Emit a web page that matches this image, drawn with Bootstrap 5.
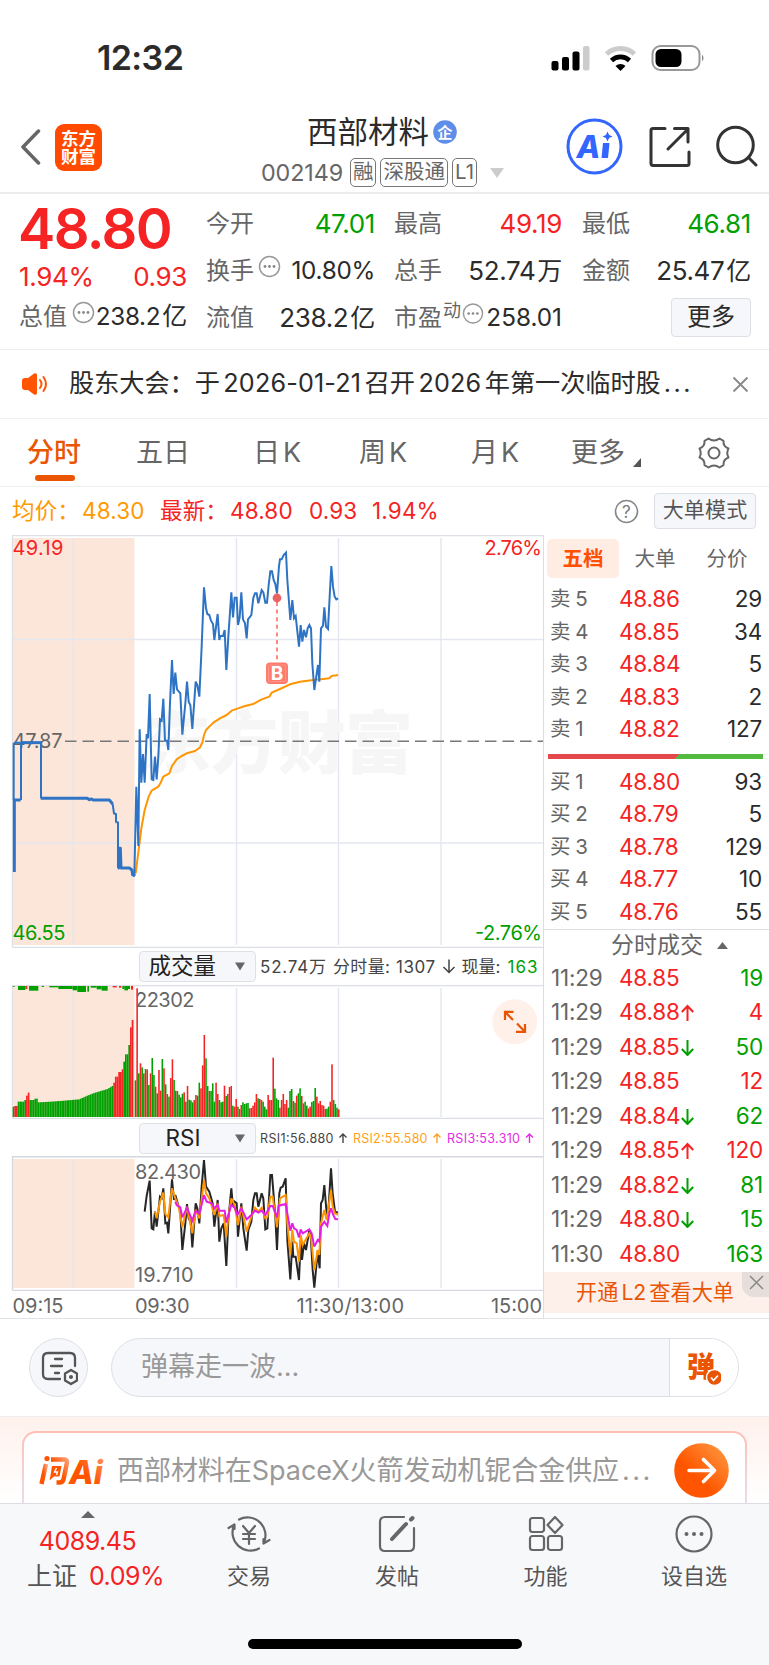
<!DOCTYPE html>
<html lang="zh-CN">
<head>
<meta charset="utf-8">
<meta name="viewport" content="width=device-width, initial-scale=1">
<title>西部材料 002149</title>
<link href="https://cdn.jsdelivr.net/npm/bootstrap@5.3.0/dist/css/bootstrap.min.css" rel="stylesheet">
<style>
:root{--up:#f52323;--down:#00a000;--or:#ea5504;--txt:#2b2b2b;--sub:#666}
html,body{margin:0;overflow-x:hidden}
body{width:769px;height:1665px;overflow:hidden;background:#fff;color:var(--txt);font-family:Inter,"Noto Sans CJK SC",sans-serif;font-size:24px;line-height:1;font-weight:400}
svg{display:block;flex:none}
svg text{font-family:Inter,"Noto Sans CJK SC",sans-serif}
.up{color:var(--up)}.down{color:var(--down)}.sub{color:var(--sub)}
.nw{white-space:nowrap}
.statusbar{height:101px;padding:14px 64px 0 97px}
.clock{font-size:34px;font-weight:600;letter-spacing:-.6px}
.head{height:93px;border-bottom:2px solid #ececec;padding:0 0 0 20px}
.logo{width:47px;height:47px;border-radius:9px;background:#ff4a00;color:#fff;font-size:17.5px;line-height:18px;font-weight:700;margin-left:14px;padding-top:6px;margin-top:1px}
.title{flex:none;width:250px;margin-left:150px;height:92px}
.title .nm{font-size:30.5px;height:44px;line-height:44px;margin:9px 0 0 55px;color:#2b2b2b}
.title .cd{height:30px;margin:4px 0 0 9px;font-size:23.3px;letter-spacing:-.1px;color:var(--sub)}
.tagbox{border:1.5px solid #777;border-radius:5px;height:29px;line-height:25px;padding:0 2px;font-size:20.5px;letter-spacing:0;margin-left:4px}
.quote{height:156px;border-bottom:1px solid #ededed;padding:0 18px 0 19px}
.quote>div{padding-top:6px}
.q0{width:168px}.q1{width:169px;margin-left:19px}.q2{width:168px;margin-left:19px}.q3{width:169px;margin-left:20px}
.qr{height:47px;display:flex;justify-content:space-between;align-items:center;white-space:nowrap}
.qr b{font-weight:400;letter-spacing:-.35px;font-size:26px}
.qr b.sm{font-size:24.3px;letter-spacing:-.3px}
.qr b i{font-style:normal;margin-left:2px;font-size:25px}
.qr .lb{color:var(--sub);display:flex;font-size:24px}
.big{font-size:56px;font-weight:600;letter-spacing:-1.6px;height:54px;line-height:58px;margin-left:-1px;color:var(--up)}
.morebtn{width:80px;height:39px;border:1.5px solid #dcdfe6;border-radius:4px;background:#f6f7fa;font-size:24px;line-height:35px;text-align:center}
.notice{height:69px;border-bottom:1.5px solid #f1f1f1;padding:0 20px 0 22px}
.notice .tx{font-size:25.2px;margin-left:21px;width:650px;letter-spacing:-.05px}
.notice .tx span{margin:0 3.5px;letter-spacing:.15px}
.tabs{height:68px;border-bottom:1.5px solid #efefef;font-size:27px;color:var(--sub);display:grid;grid-template-columns:109px 117px 106px 112px 100px 127px 1fr;padding-left:27px;align-items:center}
.tabs i{font-style:normal;margin-left:3px}
.tabs .on{color:var(--or);position:relative;font-weight:500}
.tabs .on:after{content:"";position:absolute;left:8px;width:40px;height:6px;border-radius:3px;background:var(--or);bottom:-15px}
.info{height:48px;font-size:22.5px;padding:0 13px 0 12px;letter-spacing:.15px}
.modebtn{width:102px;height:36px;border:1.5px solid #dcdfe6;border-radius:4px;background:#f6f7fa;color:#555;font-size:21px;line-height:32px;text-align:center}
.market{height:784px;border-bottom:1.5px solid #e2e3e6}
.chartcol{width:544px;border-right:1.5px solid #dcdde2}
.tool{height:37px;padding-left:138.5px}
.pick{width:117px;height:31px;border:1.5px solid #dfe1e6;border-radius:4px;background:#f6f7fa;display:flex;align-items:center;font-size:22.5px;color:#222}
.side{width:225px;padding-top:4px}
.side .st{height:39px;display:grid;grid-template-columns:72px 72px 72px;margin-left:3px;font-size:20.5px;color:var(--sub);text-align:center;line-height:39px;margin-bottom:5px}
.side .st .on{background:#ffece3;border-radius:5px;color:#ff4f00;font-weight:700}
.lv{height:32.5px;display:grid;grid-template-columns:69px 1fr 60px;align-items:center;padding:0 7px 0 6px;font-size:22.5px;letter-spacing:-.2px}
.lv span:last-child,.tk span:last-child{text-align:right}
.lv span:first-child{color:var(--sub);font-size:20.5px;letter-spacing:0;word-spacing:-1px}
.bidask{height:5px;margin:8px 6px 7px 4px;background:linear-gradient(135deg,#e5484b 0 59.9%,#52bb3f 59.9%)}
.th{border-top:1.5px solid #dcdde2;height:32px;margin-top:.5px;font-size:23px;color:var(--sub);padding-left:67px}
.tk{height:34.55px;display:grid;grid-template-columns:68px 1fr 56px;align-items:center;padding:0 6px 0 7px;font-size:22.5px;letter-spacing:-.2px}
.tk span:first-child{color:var(--sub)}
.tk svg{display:inline-block;vertical-align:-1px;margin-left:1px}
.l2{height:41px;background:#fdf0ea;color:var(--or);font-size:21.2px;padding-left:32px;position:relative;margin-top:.5px}
.l2 span{margin:0 3px}
.l2 i{position:absolute;right:0;top:0;width:27px;height:25px;background:#e6dedb;border-bottom-left-radius:12px}
.danmu{height:97px;padding:0 29px}
.cbtn{width:59px;height:59px;border:1.5px solid #dcdfe6;border-radius:50%;background:#f6f7fa}
.inputbar{width:628px;height:59px;border:1.5px solid #dcdfe6;border-radius:30px;background:#f6f7fa;margin-left:23px;overflow:hidden;color:#999;font-size:27px}
.inputbar .go{width:69px;height:100%;border-left:1.5px solid #dcdfe6;background:#fff}
.aiwrap{height:87px;background:linear-gradient(#fff1ec,#fff);border-top:1.5px solid #eee;overflow:hidden;padding:14px 22px 0}
.aibox{height:84px;border-radius:14px;padding:2px;background:linear-gradient(#ffbfb6,#e4e2f4)}
.aibox>div{height:80px;border-radius:12px;background:#fff;padding:0 16px 6px 13px;color:#999}
.botnav{height:162px;background:#f7f8fa;border-top:1.5px solid #dcdde2;position:relative;display:grid;grid-template-columns:175px 148px 148px 149px 148px;color:#555;font-size:22px}
.botnav>.it{text-align:center}
.botnav .it svg{margin:9px auto 10px}
.homebar{position:absolute;left:248px;top:135px;width:274px;height:10px;border-radius:5px;background:#000}
</style>
</head>
<body class="d-flex flex-column">

<div class="statusbar d-flex align-items-center justify-content-between">
  <span class="clock">12:32</span>
  <svg width="155" height="30" viewBox="550 42 155 30">
    <g><rect x="551.5" y="60" width="7" height="9.5" rx="2"/><rect x="562" y="56" width="7" height="13.5" rx="2"/><rect x="572.500" y="50.500" width="7" height="19" rx="2"/><rect x="583" y="45" width="6.500" height="24.500" rx="2" fill="#ccc"/></g>
    <path d="M606.5 53a20.500 20.500 0 0 1 28 0" fill="none" stroke="#ccc" stroke-width="5"/>
    <path d="M611.500 59.500a13 13 0 0 1 18 0" fill="none" stroke="#000" stroke-width="4.600"/>
    <path d="M615.500 65a7.500 7.500 0 0 1 10 0l-5 5z"/>
    <rect x="652.500" y="45" width="47" height="24" rx="8" fill="none" stroke="#999" stroke-width="2"/>
    <rect x="655.500" y="48" width="26" height="18" rx="5.500"/><path d="M702 53.500q3 3.500 0 7z" fill="#888"/>
  </svg>
</div>

<div class="head d-flex align-items-center">
  <svg width="21" height="36" viewBox="0 0 21 36"><path d="M18.500 2L3 18l15.500 16" fill="none" stroke="#666" stroke-width="3.500" stroke-linecap="round" stroke-linejoin="round"/></svg>
  <div class="logo text-center">东方<br>财富</div>
  <div class="title">
    <div class="nm d-flex align-items-center nw">西部材料
      <svg class="ms-1" width="24" height="24" viewBox="0 0 24 24"><circle cx="12" cy="12" r="11.800" fill="#5f8eea"/><text x="12" y="17.500" font-size="15" font-weight="700" fill="#fff" text-anchor="middle">企</text></svg>
    </div>
    <div class="cd d-flex align-items-center nw">002149<span class="tagbox" style="margin-left:7px">融</span><span class="tagbox">深股通</span><span class="tagbox">L1</span>
      <svg class="ms-2" width="22" height="12" viewBox="0 0 22 12"><path d="M5 1h14l-7 10z" fill="#ccc"/></svg></div>
  </div>
  <svg class="ms-auto" width="209" height="60" viewBox="560 118 209 60">
    <circle cx="594.500" cy="147.500" r="26.500" fill="#fff" stroke="#3366ff" stroke-width="3"/>
    <text x="576.500" y="158.500" font-size="31" font-weight="800" font-style="italic" fill="#3366ff">A</text>
    <path d="M603 144h6.500l-1.500 15h-6.500z" fill="#3366ff"/><path d="M607.500 132.500l1.600 3.400 3.400 1.600-3.400 1.600-1.600 3.400-1.600-3.400-3.400-1.600 3.400-1.600z" fill="#3366ff"/>
    <g fill="none" stroke="#333" stroke-width="3" stroke-linecap="round" stroke-linejoin="round"><path d="M665 129.500H653q-2 0-2 2V164q0 2.500 2 2.500h34q2 0 2-2V153M674.500 129.500H688V143M688 130l-20 20"/><circle cx="735.500" cy="146" r="17.800"/><path d="M748.500 158.500l7.500 7.500"/></g>
  </svg>
</div>

<div class="quote d-flex">
  <div class="q0">
    <div class="big">48.80</div>
    <div class="qr up" style="height:41px;padding-top:5px"><b>1.94%</b><b>0.93</b></div>
    <div class="qr" style="height:41px;padding-top:2px"><span class="lb">总值<svg style="margin:-4px 0 0 5px" width="23" height="23" viewBox="0 0 23 23"><use href="#dots"/></svg></span><b class="sm">238.2<i>亿</i></b></div>
  </div>
  <div class="q1">
    <div class="qr"><span class="lb">今开</span><b class="down">47.01</b></div>
    <div class="qr"><span class="lb">换手<svg class="ms-1" width="23" height="23" viewBox="0 0 23 23" style="margin-top:-4px"><use href="#dots"/></svg></span><b class="sm">10.80%</b></div>
    <div class="qr"><span class="lb">流值</span><b>238.2<i>亿</i></b></div>
  </div>
  <div class="q2">
    <div class="qr"><span class="lb">最高</span><b class="up">49.19</b></div>
    <div class="qr"><span class="lb">总手</span><b>52.74<i>万</i></b></div>
    <div class="qr"><span class="lb">市盈<small style="font-size:18px;margin-top:-4px;margin-left:1px">动</small><svg style="margin-left:1px;margin-top:-4px" width="22" height="23" viewBox="0 0 23 23"><use href="#dots"/></svg></span><b class="sm" style="letter-spacing:0">258.01</b></div>
  </div>
  <div class="q3">
    <div class="qr"><span class="lb">最低</span><b class="down">46.81</b></div>
    <div class="qr"><span class="lb">金额</span><b>25.47<i>亿</i></b></div>
    <div class="qr justify-content-end"><span class="morebtn">更多</span></div>
  </div>
</div>
<svg width="0" height="0" class="position-absolute"><defs><g id="dots"><circle cx="11.500" cy="11.500" r="10" fill="none" stroke="#999" stroke-width="1.500"/><g fill="#888"><circle cx="7" cy="11.500" r="1.400"/><circle cx="11.500" cy="11.500" r="1.400"/><circle cx="16" cy="11.500" r="1.400"/></g></g>
<g id="arUp" fill="none" stroke-width="2"><path d="M6.500 17V2M.8 8l5.700-6 5.700 6"/></g><g id="arDn" fill="none" stroke-width="2"><path d="M6.500 1v15M.8 10l5.700 6 5.700-6"/></g></defs></svg>

<div class="notice d-flex align-items-center">
  <svg width="26" height="22" viewBox="0 0 26 22"><path d="M0 8q0-3 3-3h3l6-4.500q3-1 3 1.500v18q0 2.500-3 1.500L6 17H3q-3 0-3-3z" fill="#ff5500"/><path d="M18 7q3 4 0 8M21.500 4q5 7 0 14" fill="none" stroke="#ff5500" stroke-width="2" stroke-linecap="round"/></svg>
  <div class="tx nw">股东大会：于<span>2026-01-21</span>召开<span>2026</span>年第一次临时股<span style="letter-spacing:2.5px;margin:0 0 0 3px">...</span></div>
  <svg class="ms-auto" width="17" height="17" viewBox="0 0 17 17"><path d="M1.500 1.500l14 14M15.500 1.500l-14 14" stroke="#888" stroke-width="1.800"/></svg>
</div>

<div class="tabs nw">
  <span class="on">分时</span><span>五日</span><span>日<i>K</i></span><span>周<i>K</i></span><span>月<i>K</i></span>
  <span class="d-flex align-items-end">更多<svg class="ms-2" width="9" height="9" viewBox="0 0 9 9" style="margin-bottom:-1px"><path d="M8 0v9H0z" fill="#555"/></svg></span>
  <svg width="36" height="34" viewBox="-18 -17 36 34" style="margin-left:-2px"><g fill="none" stroke="#666" stroke-width="2" stroke-linejoin="round"><path d="M-5.500 -14.500Q0 -10.500 5.500 -14.500L9.500 -12.200Q9 -6.500 14.500 -4.500Q12 0 14.500 4.500Q9 6.500 9.500 12.200L5.500 14.500Q0 10.500 -5.500 14.500L-9.500 12.200Q-9 6.500 -14.500 4.500Q-12 0 -14.500 -4.500Q-9 -6.500 -9.500 -12.200Z"/><circle r="5.500"/></g></svg>
</div>

<div class="info d-flex align-items-center nw">
  <span style="color:#ff9900;width:148px">均价：<span style="margin-left:2px">48.30</span></span><span class="up" style="width:149px">最新：<span style="margin-left:2px">48.80</span></span><span class="up" style="width:63px">0.93</span><span class="up">1.94%</span>
  <svg class="ms-auto" width="25" height="25" viewBox="0 0 25 25"><circle cx="12.500" cy="12.500" r="11" fill="none" stroke="#888" stroke-width="1.600"/><text x="12.500" y="18.500" font-size="17" fill="#777" text-anchor="middle">?</text></svg>
  <span class="modebtn" style="margin-left:15px">大单模式</span>
</div>

<div class="market d-flex">
  <div class="chartcol">
    <svg width="543" height="413" viewBox="0 535 543 413">
      <path d="M12.500 535.500H543M12.500 535V947M12.500 947.300H543" stroke="#dcdfe6" stroke-width="1.300" fill="none"/>
      <rect x="13" y="538" width="121.500" height="407" fill="#fce6da"/>
      <path d="M73 538V945M236.500 538V945M338.500 538V945M441 538V945M13 639.500H543M13 843H543" stroke="#e4e7ef" stroke-width="1.400"/>
      <text x="143" y="768" font-size="68" font-weight="900" fill="#f6f6f6" textLength="270">东方财富</text>
      <path d="M65 741.200H543" stroke="#777" stroke-width="1.400" stroke-dasharray="11.500 6"/>
      <text x="12.500" y="748" font-size="20" fill="#666" textLength="50">47.87</text>
      <g transform="translate(0 530) scale(.33333)" fill="none" stroke-linejoin="round">
        <path stroke="#ff9500" stroke-width="6" d="M407 1030L424 895 434 840 446 800 455 782 475 770 482 758 490 740 508 730 516 708 530 688 545 678 560 670 585 663 600 652 608 635 612 615 618 600 640 578 660 565 680 555 695 542 712 536 735 528 760 522 785 508 808 500 815 488 840 477 870 463 900 455 940 450 970 447 988 445 995 438 1014 435"/>
        <path stroke="#2f74c4" stroke-width="6" stroke-linejoin="miter" stroke-miterlimit="3" d="M41 638V810M43 638H123M403 1038L409 770 415 948 419 598 424 758 429 672 434 758 440 612 444 625 449 492 455 748 460 750 465 680 470 748 475 680 480 568 485 572 490 506 495 632 501 632 505 660 510 520 516 390 521 492 526 428 531 478 541 490 547 614 556 520 561 455 566 515 571 525 577 597 587 455 592 465 598 500 605 350 612 172 618 235 622 252 628 255 633 272 639 282 643 330 653 252 658 330 661 318 669 318 674 300 679 420 685 320 694 187 699 262 704 203 710 203 714 285 719 262 724 187 729 268 735 280 740 325 744 268 754 255 760 203 765 190 770 190 775 220 780 200 785 180 790 187 796 218 801 218 806 165 811 124 816 124 821 150 826 162 831 190 837 108 840 88 845 88 851 75 858 68 862 150 871 270 877 210 882 265 887 258 897 350 902 285 907 335 912 300 918 322 923 295 928 285 933 295 937 400 943 480 948 445 954 405 958 455 963 295 969 287 973 232 978 290 984 297 989 200 994 108 999 170 1004 200 1009 208 1014 205"/>
        <path stroke="#2f74c4" stroke-width="9" d="M43 1026V810H62M122 805H262L268 809 275 807 280 810H328L338 822M341 850H343M347 876H349M353 1014H356L359 955H361L363 1014H388L396 1020 398 1034 405 1038"/>
        <path stroke="#2f74c4" stroke-width="6" d="M63 810V638M123 638V805M338 822L342 850 348 852V875L354 877V1014"/>
        <path stroke="#2f74c4" stroke-width="9" d="M66 638H123"/>
      </g>
      <path d="M277 602V662" stroke="#ff7b6e" stroke-width="1.800" stroke-dasharray="4 3.600"/>
      <circle cx="277" cy="598" r="4.400" fill="#e5484b" fill-opacity=".85"/>
      <rect x="266" y="662.500" width="22" height="21.500" rx="4" fill="#ff7b6e"/><rect x="268.500" y="665" width="17" height="16.500" rx="1.500" fill="none" stroke="#ff9b90" stroke-width=".8"/>
      <text x="277" y="680" font-size="19" font-weight="700" fill="#fff" text-anchor="middle">B</text>
      <text x="12.500" y="554.500" font-size="20" fill="#f52323" textLength="51">49.19</text>
      <text x="12.500" y="939.500" font-size="20" fill="#00a000" textLength="53">46.55</text>
      <text x="484.500" y="554.500" font-size="20" fill="#f52323" textLength="57.500">2.76%</text>
      <text x="475" y="939.500" font-size="20" fill="#00a000" textLength="67">-2.76%</text>
    </svg>
    <div class="tool d-flex nw" style="padding-top:3px">
      <span class="pick" style="padding-left:9px">成交量<svg class="ms-auto" style="margin-right:9px" width="12" height="9" viewBox="0 0 12 9"><path d="M1 .5h10L6 8.500z" fill="#666"/></svg></span>
      <svg width="283" height="31" viewBox="256 951 283 31" font-size="17" fill="#444"><text x="260" y="973" textLength="66">52.74万</text><text x="333" y="973" textLength="57">分时量:</text><text x="396" y="973" textLength="39">1307</text><path d="M449 959.500v13M443.500 967l5.500 5.500 5.500-5.500" fill="none" stroke="#444" stroke-width="1.500"/><text x="461.500" y="973" textLength="39">现量:</text><text x="507.500" y="973" textLength="30" fill="#00a000">163</text></svg>
    </div>
    <svg width="543" height="134" viewBox="0 985 543 134">
      <path d="M12.500 985.600H543M12.500 985V1118M12.500 1118.300H543" stroke="#dcdfe6" stroke-width="1.300" fill="none"/>
      <rect x="13" y="986" width="121.500" height="131" fill="#fce6da"/>
      <path d="M73 988V1117M236.500 988V1117M338.500 988V1117M441 988V1117" stroke="#e4e7ef" stroke-width="1.400"/>
      <g id="vol" transform="translate(0 940) scale(.33333)"></g>
      <text x="135" y="1007" font-size="20" fill="#666" textLength="59.500">22302</text>
      <circle cx="514.700" cy="1021.700" r="22.500" fill="#fff0ea"/>
      <path d="M513.500 1011.800H505V1020M505.500 1012.300L513 1020M525 1024V1031.800H516M524.500 1031.300L517 1023.500" fill="none" stroke="#ea5504" stroke-width="2.200"/>
    </svg>
    <div class="tool d-flex nw" style="padding-top:4px">
      <span class="pick" style="padding-left:26px">RSI<svg class="ms-auto" style="margin-right:9px" width="12" height="9" viewBox="0 0 12 9"><path d="M1 .5h10L6 8.500z" fill="#666"/></svg></span>
      <svg width="283" height="31" viewBox="256 1123 283 31" font-size="12.500"><text x="260" y="1143" textLength="73.500" fill="#444">RSI1:56.880</text><text x="353" y="1143" textLength="74.500" fill="#ff9f20">RSI2:55.580</text><text x="447" y="1143" textLength="73" fill="#e52ae5">RSI3:53.310</text><g fill="none" stroke-width="1.400"><path d="M343 1143v-9M339.500 1137.500l3.500-3.500 3.500 3.500" stroke="#444"/><path d="M437 1143v-9M433.500 1137.500l3.500-3.500 3.500 3.500" stroke="#ff9f20"/><path d="M529.500 1143v-9M526 1137.500l3.500-3.500 3.500 3.500" stroke="#e52ae5"/></g></svg>
    </div>
    <svg width="543" height="162" viewBox="0 1156 543 162">
      <path d="M12.500 1156.700H543M12.500 1156V1290M12.500 1290.400H543" stroke="#d5d8de" stroke-width="1.400" fill="none"/>
      <rect x="13" y="1159" width="121.500" height="129" fill="#fce6da"/>
      <path d="M73 1159V1288M236.500 1159V1288M338.500 1159V1288M441 1159V1288" stroke="#e4e7ef" stroke-width="1.400"/>
      <g font-size="20" fill="#666"><text x="135" y="1178.500" textLength="66">82.430</text><text x="135" y="1282" textLength="58.500">19.710</text>
      <text x="12.500" y="1313" textLength="51">09:15</text><text x="135" y="1313" textLength="54.500">09:30</text><text x="296.500" y="1313" textLength="107.500">11:30/13:00</text><text x="491" y="1313" textLength="51">15:00</text></g>
      <g transform="translate(0 940) scale(.33333)" fill="none" stroke-width="6" stroke-miterlimit="3">
        <path stroke="#262626" d="M434 815L440 768 449 722 455 865 460 868 465 815 470 860 480 770 485 775 490 745 496 850 501 848 505 880 516 718 522 780 526 765 536 800 541 815 547 930 556 850 561 792 566 835 572 845 577 922 587 790 592 805 598 850 605 740 612 660 618 740 628 755 638 790 643 860 653 780 658 905 664 865 671 850 679 978 685 840 694 745 699 800 704 785 710 790 714 890 724 790 730 865 740 932 745 870 754 845 760 780 765 760 770 760 775 800 785 760 790 775 796 868 802 865 811 705 816 705 826 830 831 930 838 760 842 743 848 740 857 715 862 900 871 1018 877 905 880 950 887 950 897 1020 902 900 906 960 912 910 918 930 928 870 932 885 938 990 943 1043 953 935 959 985 963 790 968 780 973 735 980 820 985 815 993 685 998 760 1005 815 1014 818"/>
        <path stroke="#ff9500" d="M465 815L470 835 480 785 490 758 496 822 505 832 512 770 516 745 526 775 536 800 547 862 561 800 566 825 577 880 587 810 598 835 612 720 618 760 628 775 643 825 653 790 658 828 671 825 679 890 685 830 694 775 704 795 714 855 724 800 740 875 754 830 765 803 775 815 785 803 796 835 802 832 811 770 818 770 831 862 840 775 857 765 862 850 871 945 877 870 882 905 890 910 897 965 902 885 908 915 928 880 933 890 943 990 953 930 958 945 963 850 973 810 980 840 993 750 998 800 1005 820 1014 825"/>
        <path stroke="#e51ee5" d="M526 785L530 795 541 802 547 832 561 803 577 842 587 812 598 822 612 765 620 785 635 790 643 805 653 795 658 812 674 812 679 848 685 825 694 795 704 803 712 825 724 805 740 838 754 825 765 812 775 818 785 812 796 825 811 798 818 798 831 832 836 797 857 792 862 820 871 872 877 850 882 865 890 870 897 892 902 868 908 880 928 868 935 880 943 920 953 900 958 905 963 860 973 845 982 858 988 820 993 805 1000 825 1006 837 1014 838"/>
      </g>
    </svg>
  </div>
  <div class="side">
    <div class="st"><span class="on">五档</span><span>大单</span><span>分价</span></div>
    <div id="asks"></div>
    <div class="bidask"></div>
    <div id="bids"></div>
    <div class="th d-flex align-items-center">分时成交<svg style="margin-left:14px" width="11" height="7" viewBox="0 0 11 7"><path d="M0 7h11L5.500 0z" fill="#666"/></svg></div>
    <div id="ticks"></div>
    <div class="l2 d-flex align-items-center">开通<span>L2</span>查看大单<i><svg width="27" height="25" viewBox="0 0 27 25"><path d="M8 4l13 13M21 4L8 17" stroke="#888" stroke-width="1.500"/></svg></i></div>
  </div>
</div>

<div class="danmu d-flex align-items-center">
  <div class="cbtn d-flex align-items-center justify-content-center">
    <svg width="38" height="36" viewBox="40 1351 38 36"><g fill="none" stroke="#555" stroke-width="2.300" stroke-linecap="round"><path d="M60 1380H48q-5 0-5-5v-16q0-5 5-5h22q5 0 5 5v8M55 1360h7M51 1367h11M55 1374h4"/><path d="M71 1371l6 3.500v7l-6 3.500-6-3.500v-7z" stroke-linejoin="round"/></g><circle cx="71" cy="1378" r="2" fill="#555"/></svg>
  </div>
  <div class="inputbar d-flex align-items-center justify-content-between">
    <span class="nw" style="padding:0 0 3px 29px">弹幕走一波...</span>
    <span class="go d-flex align-items-center justify-content-center"><svg width="36" height="38" viewBox="685 1350 36 38" style="margin-right:2px"><text x="687" y="1378" font-size="28" font-weight="900" fill="#ea5504">弹</text><circle cx="714.500" cy="1378.500" r="8" fill="#ea5504" stroke="#fff" stroke-width="1.500"/><path d="M711 1378.500l2.500 3 4.500-5" fill="none" stroke="#fff" stroke-width="1.800"/></svg></span>
  </div>
</div>

<div class="aiwrap"><div class="aibox"><div class="d-flex align-items-center nw">
  <svg width="72" height="40" viewBox="37 1449 72 40"><defs><linearGradient id="lg" x1="0" y1="1" x2="1" y2="0"><stop offset=".5" stop-color="#ff5500"/><stop offset="1" stop-color="#ff9a70"/></linearGradient></defs>
    <g fill="none" stroke="url(#lg)" stroke-width="4.500" stroke-linejoin="round"><path d="M46 1463l-4.500 20"/><path d="M51 1458.500h13q3.500 0 3 3l-3.500 17q-1 3-4 3h-3"/></g><circle cx="47" cy="1457.500" r="2.600" fill="#ff5500"/>
    <path d="M52 1465h9.500l-2 10.500h-5.500l-4.500 4 .8-4z" fill="#ff5500"/><path d="M56.500 1467l-2 4h3l-1 3" fill="none" stroke="#fff" stroke-width="1.300"/>
    <text x="69" y="1483" font-size="32" font-weight="800" font-style="italic" fill="url(#lg)">Ai</text></svg>
  <span style="font-size:27px;margin-left:8px;letter-spacing:-.05px">西部材料在SpaceX火箭发动机铌合金供应<span style="letter-spacing:2.5px;margin-left:3px">...</span></span>
  <svg class="ms-auto" width="55" height="55" viewBox="0 0 55 55"><defs><linearGradient id="go" x1=".2" y1=".7" x2=".9" y2="0"><stop offset=".2" stop-color="#ff5500"/><stop offset="1" stop-color="#ff9a40"/></linearGradient></defs><circle cx="27.500" cy="27.500" r="27.300" fill="url(#go)"/><path d="M15 27.500h25M29.500 16.500l11 11-11 11" fill="none" stroke="#fff" stroke-width="3.600" stroke-linecap="round" stroke-linejoin="round"/></svg>
</div></div></div>

<div class="botnav nw">
  <div class="it up" style="font-size:25px;letter-spacing:-.5px"><svg width="14" height="7" viewBox="0 0 14 7" style="margin:7px auto 11px"><path d="M0 7h14L7 0z" fill="#666"/></svg><div>4089.45</div><div style="margin-top:10px;padding-left:16px"><span style="color:#555;letter-spacing:0">上证</span><span style="margin-left:12px">0.09%</span></div></div>
  <div class="it"><svg width="44" height="42" viewBox="-22 -21 44 42" fill="none" stroke="#666" stroke-width="2.200" stroke-linecap="round" stroke-linejoin="round"><path d="M-10 -14.500A18 18 0 0 1 15 8.500M20.500 6l-6 3.500V5M10 14.500A18 18 0 0 1 -15 -8.500M-20.500 -6l6 -3.500V-5M-6 -8L0 -1l6 -7M0 -1V10M-6 0H6M-6 5H6"/></svg>交易</div>
  <div class="it"><svg width="40" height="42" viewBox="-20 -21 40 42" fill="none" stroke="#666" stroke-width="2.200" stroke-linecap="round"><path d="M7 -17H-12q-5 0-5 5V12q0 5 5 5H12q5 0 5-5V-6"/><path d="M-5 5L9 -10M14 -14.500l1.500 -1.500" stroke-width="4"/></svg>发帖</div>
  <div class="it"><svg width="40" height="42" viewBox="-20 -21 40 42" fill="none" stroke="#666" stroke-width="2.200" stroke-linejoin="round"><rect x="-16" y="-16" width="14" height="14" rx="2.500"/><rect x="-16" y="2" width="14" height="14" rx="2.500"/><rect x="2" y="2" width="14" height="14" rx="2.500"/><path d="M9 -17l7.500 8L9 -1 1.500 -9z"/></svg>功能</div>
  <div class="it"><svg width="40" height="42" viewBox="-20 -21 40 42" fill="#666"><circle r="17.500" fill="none" stroke="#666" stroke-width="2.200"/><circle cx="-7.500" r="2"/><circle r="2"/><circle cx="7.500" r="2"/></svg>设自选</div>
  <div class="homebar"></div>
</div>

<script src="https://cdn.jsdelivr.net/npm/bootstrap@5.3.0/dist/js/bootstrap.bundle.min.js"></script>
<script>
const R='#f52323',G='#00a000';
const level=r=>`<div class="lv"><span>${r[0]}</span><span class="up">${r[1]}</span><span>${r[2]}</span></div>`;
asks.innerHTML=[['卖 5','48.86',29],['卖 4','48.85',34],['卖 3','48.84',5],['卖 2','48.83',2],['卖 1','48.82',127]].map(level).join('');
bids.innerHTML=[['买 1','48.80',93],['买 2','48.79',5],['买 3','48.78',129],['买 4','48.77',10],['买 5','48.76',55]].map(level).join('');
const arrow={u:`<svg width="13" height="17" stroke="${R}"><use href="#arUp"/></svg>`,d:`<svg width="13" height="17" stroke="${G}"><use href="#arDn"/></svg>`};
ticks.innerHTML=[['11:29','48.85','',19,0],['11:29','48.88','u',4,1],['11:29','48.85','d',50,0],['11:29','48.85','',12,1],['11:29','48.84','d',62,0],['11:29','48.85','u',120,1],['11:29','48.82','d',81,0],['11:29','48.80','d',15,0],['11:30','48.80','',163,0]]
 .map(r=>`<div class="tk"><span>${r[0]}</span><span class="up nw">${r[1]}${arrow[r[2]]||''}</span><span class="${r[4]?'up':'down'}">${r[3]}</span></div>`).join('');
let out='';
const bar=(x,y1,y2,w,c)=>out+=`<rect x="${x}" y="${y1}" width="${w}" height="${y2-y1}" fill="${c}"/>`;
/* session volume: colour letter + bar top */
const vol='g421 r145 g400 r370 g382 r400 g387 r388 g435 r400 g354 g405 r440 g460 r390 r452 g357 r385 g433 r462 g470 r414 r358 g420 r452 g453 g464 g472 g461 r457 g485 r438 g479 g481 g487 r480 r465 g467 g428 r445 r376 r285 g355 g438 r453 g453 g430 g485 r428 r462 g480 g487 g485 r437 g468 r462 r441 r438 g497 r500 r477 g500 r507 r495 g487 g492 g490 g489 r505 r504 r497 r487 r462 g475 r477 r480 g485 g500 g508 r465 r480 r480 r353 g446 g475 g480 r503 r480 r462 r492 r480 g503 g453 g447 r483 g488 r467 g460 g445 r468 r490 g485 g497 r505 r500 g486 g483 g444 r470 r490 r483 r495 r497 r507 g506 g500 r485 r373 g480 g492 g503 r508'.split(' ');
vol.forEach((v,i)=>bar(404+i*5.04,+v.slice(1),531,4.7,v[0]=='r'?R:G));
/* call auction volume: x, top, colour */
const pre=[[38,500,G],[44,498,R],[54,485,G],[70,480,G],[76,467,R],[82,458,R],[88,480,G],[103,476,G],[114,487,G],[150,485,G],[190,482,G],[235,478,G],[260,467,G],[280,459,G],[300,453,G],[320,447,G],[335,438,G],[339,428,R],[345,410,R],[355,396,R],[365,388,R],[370,365,G],[376,343,G],[382,315,G],[387,262,R],[392,240,R]];
for(let x=38;x<396;x+=5.03){let k=0;while(k<pre.length-1&&pre[k+1][0]<=x+1)k++;const a=pre[k],b=pre[k+1]||a;const smooth=(k>7&&k<16);const y=smooth?a[1]+(b[1]-a[1])*(x-a[0])/(b[0]-a[0]):a[1];bar(x,y,531,5.03,a[2]);}
[[38,45,140,G],[54,76,150,G],[76,82,147,R],[87,115,152,G],[125,132,141,G],[148,175,142,G],[175,218,147,G],[218,232,151,G],[232,258,156,G],[262,267,155,G],[272,290,143,G],[290,305,148,G],[305,323,152,G],[338,350,142,R],[357,364,143,R],[367,373,147,G],[373,384,151,G],[384,390,147,G],[393,399,149,R]].forEach(t=>bar(t[0],138,t[2],t[1]-t[0],t[3]));
document.getElementById('vol').innerHTML=out;
</script>
</body>
</html>
